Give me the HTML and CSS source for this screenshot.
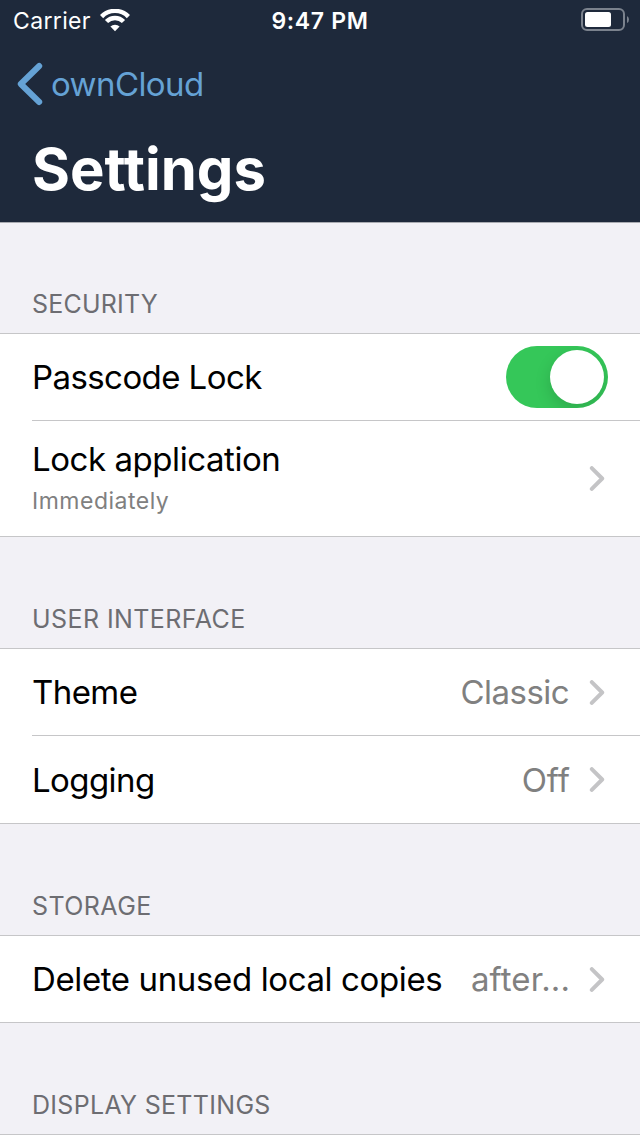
FILE: index.html
```
<!DOCTYPE html>
<html lang="en">
<head>
<meta charset="utf-8">
<title>Settings</title>
<link rel="stylesheet" href="styles.css">
</head>
<body>
<svg class="defs" width="0" height="0" aria-hidden="true">
  <symbol id="chevron" viewBox="0 0 14 24"><path d="M2 2 L12 12 L2 22"/></symbol>
</svg>
<header class="navbar">
  <div class="status">
    <div class="status-left">
      <span class="carrier">Carrier</span>
      <svg class="wifi" width="30" height="23" viewBox="0 0 30 23">
        <path class="arc" d="M1.6 7.6 A18.6 18.6 0 0 1 28.4 7.6"/>
        <path class="arc" d="M6.5 12.6 A11.7 11.7 0 0 1 23.5 12.6"/>
        <path class="dot" d="M15 22.2 L10.4 17.6 A6.7 6.7 0 0 1 19.6 17.6 Z"/>
      </svg>
    </div>
    <span class="time">9:47 PM</span>
    <div class="status-right">
      <svg width="48" height="24" viewBox="0 0 48 24">
        <rect class="shell" x="1" y="1" width="42" height="21" rx="5"/>
        <rect class="level" x="4" y="4" width="26" height="15" rx="2.5"/>
        <path class="cap" d="M46 8 Q48 9 48 11.5 Q48 14 46 15 Z"/>
      </svg>
    </div>
  </div>
  <a class="back">
    <svg width="26" height="44" viewBox="0 0 26 44"><path d="M22.2 4 L3.8 22 L22.2 40"/></svg>
    <span class="back-label">ownCloud</span>
  </a>
  <h1 class="title">Settings</h1>
</header>
<main>
  <h2 class="section-title security">Security</h2>
  <div class="group">
    <div class="row">
      <span class="label passcode">Passcode Lock</span>
      <span class="switch"><span class="knob"></span></span>
    </div>
    <div class="row tall">
      <div class="stack">
        <span class="label lock">Lock application</span>
        <span class="subtitle">Immediately</span>
      </div>
      <svg class="chevron"><use href="#chevron"/></svg>
    </div>
  </div>
  <h2 class="section-title interface">User Interface</h2>
  <div class="group">
    <div class="row">
      <span class="label theme">Theme</span>
      <span class="value classic">Classic</span>
      <svg class="chevron"><use href="#chevron"/></svg>
    </div>
    <div class="row">
      <span class="label logging">Logging</span>
      <span class="value off">Off</span>
      <svg class="chevron"><use href="#chevron"/></svg>
    </div>
  </div>
  <h2 class="section-title storage">Storage</h2>
  <div class="group">
    <div class="row">
      <span class="label delete">Delete unused local copies</span>
      <span class="value after">after...</span>
      <svg class="chevron"><use href="#chevron"/></svg>
    </div>
  </div>
  <h2 class="section-title display">Display Settings</h2>
  <div class="group last"></div>
</main>
</body>
</html>
```
FILE: styles.css
```
* { box-sizing: border-box; }
body {
  margin: 0;
  width: 640px;
  height: 1136px;
  overflow: hidden;
  background: #f2f1f6;
  font-family: Inter, "Liberation Sans", sans-serif;
  color: #000;
}
.defs { display: block; }
h1, h2 { margin: 0; }
svg { display: block; flex: none; fill: none; }

.navbar {
  height: 223px;
  background: #1e293b;
  border-bottom: 1px solid #a9abb1;
  color: #fff;
}
.status {
  display: grid;
  grid-template-columns: 1fr auto 1fr;
  height: 41px;
  padding: 0 11px 0 13px;
  align-items: center;
  font-size: 23px;
  line-height: 41px;
}
.status-left { display: flex; align-items: center; gap: 9px; }
.wifi { margin-top: -1px; }
.status-right { display: flex; justify-content: flex-end; margin-top: -3px; }
.carrier { letter-spacing: 0.35px; padding-top: 1px; }
.time { font-weight: 600; letter-spacing: 0.65px; padding: 1px 2px 0 0; }
.arc { stroke: #fff; stroke-width: 4.4; }
.dot { fill: #fff; }
.shell { stroke: #7b828d; stroke-width: 2; }
.level { fill: #fff; }
.cap { fill: #7b828d; }
.back {
  display: flex;
  align-items: center;
  gap: 8px;
  height: 86px;
  padding-left: 17px;
  color: #65a2d5;
  font-size: 33px;
  letter-spacing: -0.6px;
}
.back svg { stroke: #65a2d5; stroke-width: 6; stroke-linecap: round; stroke-linejoin: round; }
.title {
  height: 84px;
  padding-left: 32px;
  font-size: 58px;
  line-height: 84px;
  font-weight: 700;
}

.section-title {
  height: 111px;
  padding: 67px 32px 0;
  font-size: 25px;
  line-height: 30px;
  font-weight: 400;
  text-transform: uppercase;
  color: #6d6d72;
}
.security { height: 110px; padding-top: 66px; letter-spacing: 0.2px; }
.interface { letter-spacing: 0.42px; }
.storage { letter-spacing: 0.42px; }
.display { letter-spacing: 0.3px; }
.group {
  background: #fff;
  border-top: 1px solid #c6c6c8;
  border-bottom: 1px solid #c6c6c8;
}
.group.last { height: 2px; border-bottom: 0; }
.row {
  display: flex;
  align-items: center;
  height: 86px;
  margin-left: 32px;
  padding-right: 35px;
  font-size: 33px;
  line-height: 40px;
  white-space: nowrap;
}
.row + .row { border-top: 1px solid #c6c6c8; height: 88px; }
.row.tall { height: 116px; }
.label { flex: 1; }
.passcode, .theme, .logging { letter-spacing: -0.58px; }
.lock { letter-spacing: -0.44px; }
.delete { letter-spacing: -0.38px; }
.value { color: #808080; margin-right: 19px; }
.classic { letter-spacing: -0.55px; margin-right: 20px; }
.after { letter-spacing: 0.1px; }
.stack { flex: 1; display: flex; flex-direction: column; gap: 6px; margin-top: -1px; }
.subtitle { font-size: 23px; line-height: 32px; color: #808080; letter-spacing: 0.5px; }
.chevron {
  width: 16px;
  height: 25px;
  stroke: #c4c4c6;
  stroke-width: 3.8;
  stroke-linecap: round;
  stroke-linejoin: round;
}
.switch {
  display: flex;
  justify-content: flex-end;
  width: 102px;
  height: 62px;
  margin-right: -3px;
  padding: 4px;
  border-radius: 31px;
  background: #35c759;
  overflow: hidden;
}
.knob {
  width: 54px;
  height: 54px;
  border-radius: 50%;
  background: #fff;
  box-shadow: 0 6px 16px rgba(0, 0, 0, 0.15);
}
```
